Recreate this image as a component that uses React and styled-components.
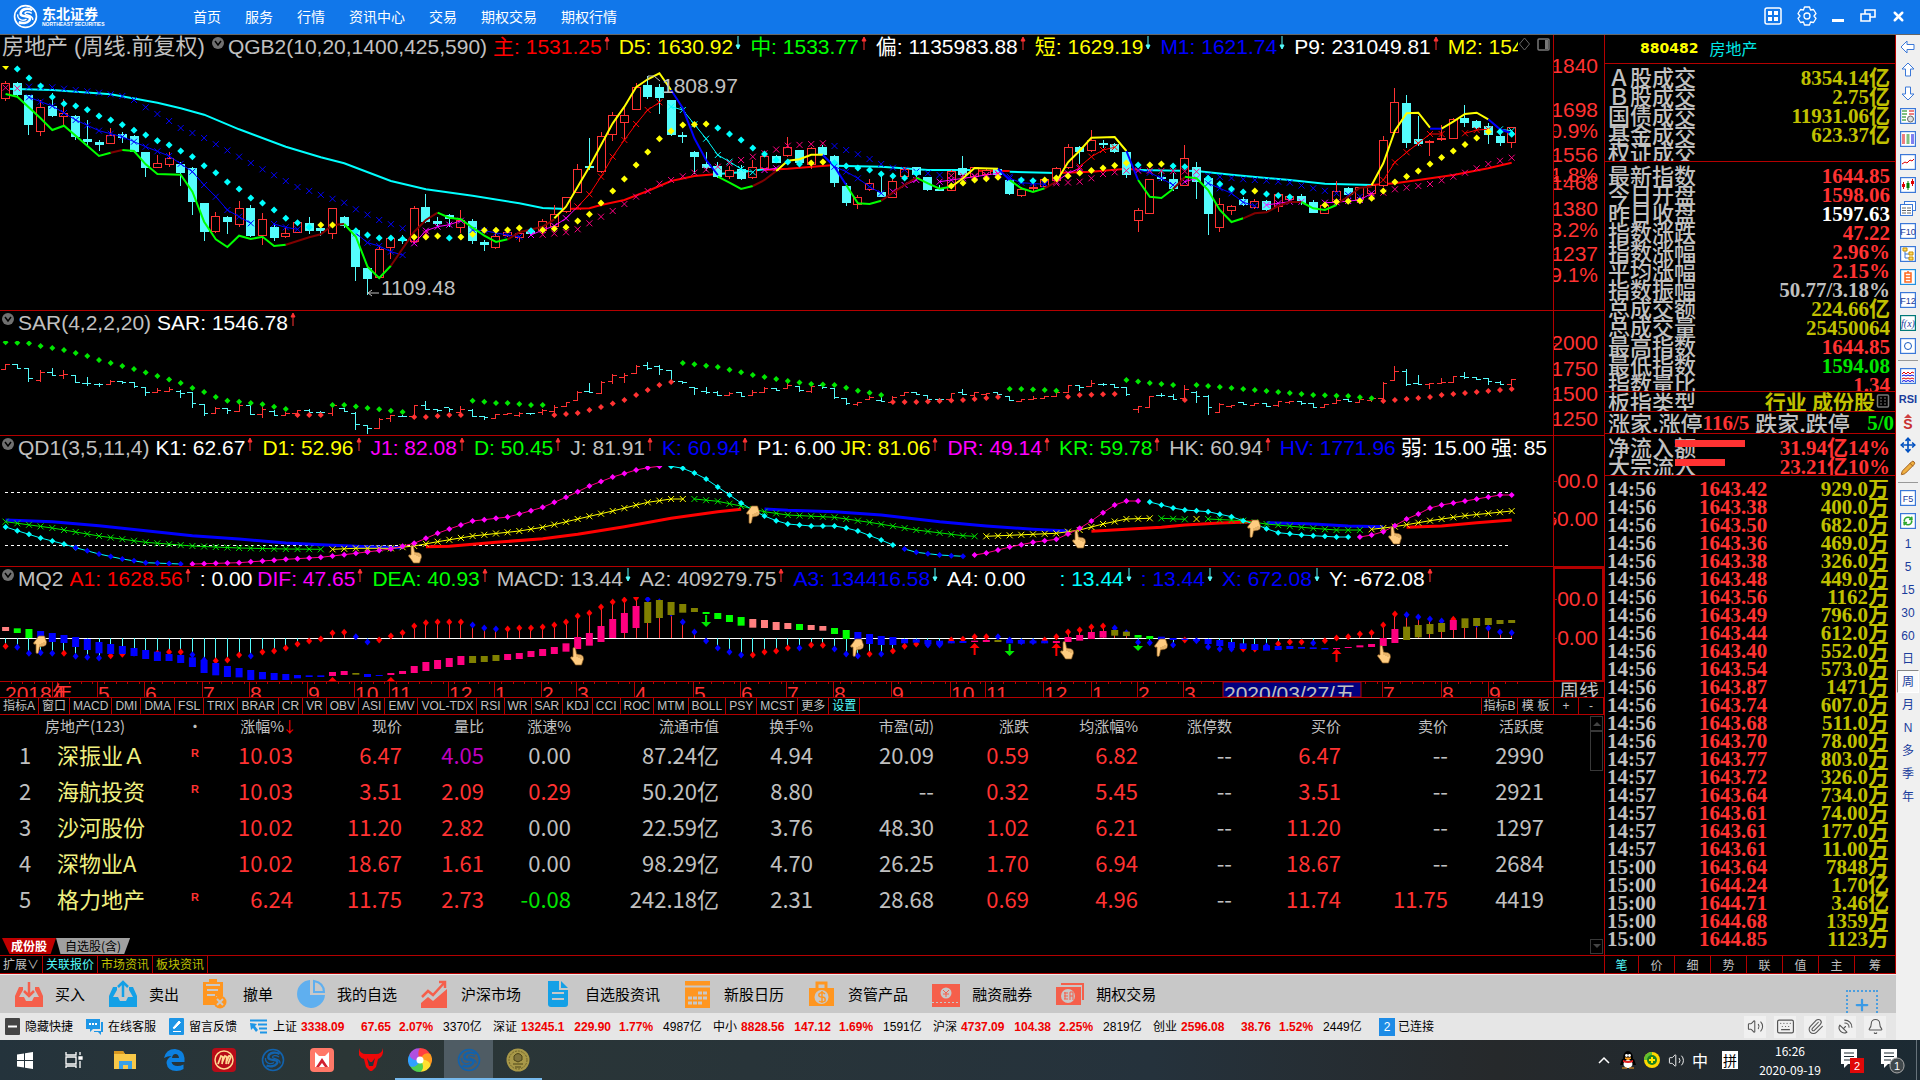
import React from 'react'
import styled, { createGlobalStyle, css } from 'styled-components'
import {
	Bell,
	Keyboard,
	Move,
	Paperclip,
	Pencil,
	Plus,
	RefreshCw,
	SatelliteDish,
	Volume2,
	X,
} from 'lucide-react'

const colors = {
	line: '#b40000',
	red: '#ff3232',
	pure: '#ff0000',
	cyan: '#54fcfc',
	aqua: '#00ffff',
	grey: '#c0c0c0',
	white: '#ffffff',
	yellow: '#ffff00',
	gold: '#c0c000',
	green: '#00e600',
	lime: '#00ff00',
	blue: '#0000ff',
	magenta: '#ff00ff',
	pink: '#ff0080',
	salmon: '#ff8080',
	olive: '#808000',
	maroon: '#800000',
}

const sans = `'Liberation Sans', 'Noto Sans CJK SC', sans-serif`
const cjk = `'Noto Sans CJK SC', sans-serif`
const serif = `'Liberation Serif', 'Noto Sans CJK SC', serif`

const GlobalStyle = createGlobalStyle`
	* {
		box-sizing: border-box;
	}
	body {
		margin: 0;
		background: #000;
		font-family: ${sans};
		font-size: 12px;
	}
	button {
		margin: 0;
		padding: 0;
		border: 0;
		background: none;
		color: inherit;
		font: inherit;
		white-space: nowrap;
	}
	a {
		color: inherit;
		text-decoration: none;
	}
	svg {
		display: block;
		flex: none;
	}
`

/* ---------- chart data ---------- */
// Levels are kept at three units per pixel, bars are addressed by index.

const STEP = 11.675
const barX = i => 5.6 + i * STEP

const parse = text =>
	text.split(' ').map(pair => pair.split(':').map(Number))

const run = (color, text) => ({ color, points: parse(text) })

// fills the gaps between the given points, one value for each bar
const expand = points => {
	const out = []
	points.forEach(([i, v], n) => {
		const next = points[n + 1]
		if (!next) {
			out.push([i, v])
			return
		}
		for (let k = i; k < next[0]; k++) {
			out.push([k, v + ((next[1] - v) * (k - i)) / (next[0] - i)])
		}
	})
	return out
}

// rising flag, high, body top, body bottom, low
const CANDLES = `1,243,250,296,302 0,245,250,282,290 0,285,286,374,405 1,300,322,394,408 0,280,318,345,350
1,297,340,349,382 0,345,348,410,420 0,360,418,425,440 0,420,426,434,453 1,385,405,430,432
0,396,404,412,428 0,405,408,453,458 0,456,457,503,531 1,465,489,502,505 1,455,475,493,500
0,485,492,516,558 0,500,504,605,645 0,608,609,693,722 1,635,649,695,700 0,648,652,665,702
1,603,625,674,680 0,615,625,705,712 1,640,657,706,735 0,668,681,711,722 1,680,700,710,714
1,660,668,697,700 0,651,669,690,701 0,670,686,690,708 1,625,626,700,716 0,648,652,675,684
0,685,692,800,842 0,800,804,836,885 1,735,748,832,836 1,712,715,742,776 0,705,719,722,732
1,618,625,723,730 0,583,621,663,668 0,650,663,670,682 0,642,645,655,680 1,630,660,682,700
0,657,665,720,732 0,720,727,734,753 1,700,708,742,748 1,690,698,706,712 1,682,700,712,725
0,690,695,700,708 1,658,664,690,705 1,615,642,680,690 1,590,592,634,640 1,493,508,577,580
0,414,498,503,510 1,397,408,514,520 1,337,346,403,423 1,325,346,367,418 1,250,262,328,330
0,228,255,288,298 0,252,262,291,342 0,300,300,404,408 0,397,405,408,428 0,452,457,470,523
0,455,492,502,513 0,487,500,530,534 1,497,510,529,538 0,495,507,536,540 1,480,502,532,536
1,455,470,506,510 0,465,469,486,490 1,410,441,466,470 0,450,451,486,495 1,440,445,492,508
0,436,441,462,468 0,466,468,548,560 0,550,558,608,618 1,586,592,612,627 1,538,551,568,572
0,515,576,590,592 1,535,545,592,594 1,500,508,530,536 0,500,502,524,530 0,530,531,569,573
0,555,569,572,573 1,510,514,571,573 0,468,504,524,530 1,500,502,530,545 1,505,510,522,535
0,505,508,522,537 0,540,541,581,585 1,560,569,586,590 1,540,562,566,575 1,533,538,558,562
1,500,505,540,548 1,432,442,502,506 0,438,441,455,492 1,390,421,452,455 0,420,429,432,445
0,430,432,455,459 0,450,456,524,533 1,625,631,661,695 1,536,538,640,643 0,510,532,535,543
0,520,537,564,574 1,435,475,556,558 0,487,501,543,597 0,525,536,641,705 1,595,613,682,695
1,615,619,630,645 0,590,599,612,618 1,597,604,622,628 0,600,603,627,632 1,580,583,620,635
1,585,588,598,608 0,582,588,608,615 0,600,606,638,640 1,612,615,640,642 1,544,573,605,608
0,560,564,584,592 1,560,563,598,603 1,550,556,580,590 1,408,421,555,560 1,264,307,398,400
0,285,309,426,444 0,347,417,429,438 1,420,424,428,468 1,375,415,418,424 1,355,359,415,417
0,315,354,368,380 0,360,363,383,388 0,368,378,404,432 0,400,408,428,438 1,380,382,428,443`
	.split(/\s+/)
	.map(row => row.split(',').map(Number))

const LONG_LINE = [
	run(colors.aqua, '0:266 4:270 9:283 13:308 15:325 17:344 20:388 24:440 27:472 29:490 33:543 36:568 40:587 44:610 46:624 48:627'),
	run(colors.pure, '48:627 50:625 51:615 53:600 55:573 57:543 59:528 61:522'),
	run(colors.aqua, '61:522 63:517 65:508'),
	run(colors.pure, '65:510 67:506 71:495'),
	run(colors.aqua, '71:497 75:500 79:510 83:510'),
	run(colors.pure, '83:512 86:513'),
	run(colors.aqua, '86:515 90:519'),
	run(colors.pure, '90:519 93:515 96:506 97:509'),
	run(colors.aqua, '97:510 102:513 105:524 110:540 113:551 117:555'),
	run(colors.pure, '117:555 119:550 121:540 124:525 127:505 129:488'),
]

const SHORT_LINE = [
	run(colors.lime, '0:282 1:290 3:355 4:390 5:377 8:468 9:458'),
	run(colors.maroon, '9:458 10:450'),
	run(colors.lime, '10:450 11:453 12:493 13:522 15:524 16:575 17:665 18:718 19:741 20:707 21:717 22:710 23:738 24:734'),
	run(colors.maroon, '24:734 26:712 27:703 28:675 29:672'),
	run(colors.lime, '29:672 30:710 31:800 32:834 33:797'),
	run(colors.maroon, '33:797 35:695 36:660 37:638'),
	run(colors.lime, '37:638 38:653 39:658 40:683 41:707 42:726 43:718'),
	run(colors.maroon, '43:718 44:697 46:680 47:658'),
	run(colors.yellow, '47:655 48:620 50:500 52:370 53:320 54:262 55:238 56:220 57:270'),
	run(colors.blue, '57:270 58:325 59:415 60:480 61:525'),
	run(colors.lime, '61:530 62:548 63:567 64:558'),
	run(colors.maroon, '64:558 65:540 66:513'),
	run(colors.yellow, '66:513 67:482 68:478 69:464 70:464'),
	run(colors.blue, '70:465 71:500 72:555'),
	run(colors.lime, '72:555 73:610 74:612 75:602'),
	run(colors.maroon, '75:602 77:555 78:533'),
	run(colors.lime, '78:533 79:550 80:566 81:560'),
	run(colors.yellow, '81:560 82:535 83:504 85:506'),
	run(colors.blue, '85:506 86:540'),
	run(colors.lime, '86:540 87:565 88:576 89:565'),
	run(colors.maroon, '89:565 90:545'),
	run(colors.yellow, '90:545 91:487 92:452 93:413 95:411 96:453'),
	run(colors.blue, '96:453 97:540'),
	run(colors.lime, '97:540 98:590 99:594 100:567'),
	run(colors.maroon, '100:567 101:532'),
	run(colors.lime, '101:530 102:535 103:570 104:630 105:666 106:655'),
	run(colors.maroon, '106:655 107:640 108:637 109:618 110:606 111:606'),
	run(colors.lime, '111:606 112:625 113:630 114:615'),
	run(colors.maroon, '114:612 115:590 116:563 117:560'),
	run(colors.yellow, '117:556 118:490 119:392 120:340 121:338 122:383'),
	run(colors.blue, '122:386 123:386'),
	run(colors.yellow, '123:386 124:365 125:342 126:338 127:358'),
	run(colors.blue, '127:358 128:388 129:400'),
]

const MID_LINE = [
	run(colors.blue, '2:292 4:318 6:360 8:392 10:410 12:440 14:468 16:515 17:555 18:590 19:630 20:650 21:670'),
	run(colors.blue, '23:672 24:682 25:688'),
	run(colors.blue, '30:700 31:728 32:738 33:755 34:765'),
	run(colors.magenta, '35:730 36:692 37:680 38:674 39:662'),
	run(colors.blue, '40:690 41:692 43:705 44:710'),
	run(colors.magenta, '45:705 46:690 47:678 48:655 49:620'),
	run(colors.pure, '49:620 50:583 51:530 52:470 53:420 54:372 55:330 56:307'),
	run(colors.aqua, '57:320 58:330 59:373 60:416 61:465 62:485 63:507 64:517'),
	run(colors.magenta, '65:510 66:505'),
	run(colors.blue, '71:500 72:515 73:535 74:560 75:580'),
	run(colors.magenta, '76:575 77:555 78:540'),
	run(colors.magenta, '80:545 81:540 83:530 85:520'),
	run(colors.blue, '86:535 87:548 89:553'),
	run(colors.magenta, '90:545 91:520 92:505'),
	run(colors.pure, '92:500 93:470 94:450 95:442'),
	run(colors.blue, '97:510 98:518 99:535 100:555'),
	run(colors.magenta, '101:545 102:535'),
	run(colors.blue, '103:550 104:565 105:580 106:607 107:617'),
	run(colors.magenta, '108:615 109:610 110:605 111:605'),
	run(colors.magenta, '113:608 114:607 115:603 116:600 117:580'),
	run(colors.pure, '118:540 119:487 120:457 121:430 122:402 123:402'),
	run(colors.pure, '125:400 126:390 127:388'),
	run(colors.aqua, '128:388 129:392'),
]

const CROSSES = [
	run(colors.pink, '0:263 1:265'),
	run(colors.blue, '2:260 4:262 6:270 8:278 10:288 11:300 12:322 13:342 15:384 17:414 20:470 22:508 25:561 29:608 30:628 32:660 34:685'),
	run(colors.pink, '35:720 36:700'),
	run(colors.pink, '46:704 48:697 49:688 50:670 51:650 52:633 53:612 54:590 55:573 56:551 57:540 59:518 61:500 63:480 65:460 67:437 70:430'),
	run(colors.blue, '71:438 72:450 73:463 74:477 75:492 76:503 78:515 80:525'),
	run(colors.pink, '81:527 83:528 85:522'),
	run(colors.blue, '86:530 87:543 89:552'),
	run(colors.pink, '90:550 92:545 93:535 94:522 96:512 98:512 102:515'),
	run(colors.blue, '103:527 106:538 108:542 110:548 112:565 114:580 116:590'),
	run(colors.pink, '117:590 118:578 119:568 121:558 122:552 124:530 125:518 127:492 129:473'),
]

const DOTS = [
	run(colors.aqua, '1:207 2:234 3:258 4:291 5:311 6:318 7:329 8:348 9:360 10:374 11:391 12:405 13:422 14:435 15:453 16:470 17:497 18:518 19:546 20:567 21:594 22:609 23:630 24:655 25:668 26:682'),
	run(colors.yellow, '27:675 28:675'),
	run(colors.aqua, '30:692 31:705 32:714 33:714 34:717'),
	run(colors.yellow, '35:711 36:711 37:708'),
	run(colors.aqua, '38:714'),
	run(colors.yellow, '39:711 40:703 41:691 43:690 44:684'),
	run(colors.aqua, '45:692'),
	run(colors.yellow, '46:690 48:682 49:663 50:643 51:609 52:573 53:537 54:495 55:456 56:416 57:393 58:375 60:372'),
	run(colors.aqua, '61:384 62:402 63:420 64:444 65:462 66:480 68:492'),
	run(colors.yellow, '69:489 70:486'),
	run(colors.aqua, '71:488 72:498 74:510 75:522 77:534 78:520'),
	run(colors.yellow, '81:558 83:540 85:532'),
	run(colors.aqua, '87:540 88:542'),
	run(colors.yellow, '89:540 91:528 92:519 94:504 96:489'),
	run(colors.aqua, '97:495'),
	run(colors.yellow, '98:495 99:492'),
	run(colors.aqua, '100:498 101:500'),
	run(colors.aqua, '103:535 104:552 105:567 106:576'),
	run(colors.yellow, '107:573'),
	run(colors.aqua, '108:582 110:591'),
	run(colors.yellow, '113:615 114:605 116:602 117:595 118:573 119:546 121:513 122:492 127:395'),
	run(colors.aqua, '128:395 129:403'),
]

const SAR_DOTS = [
	run(colors.green, '0:127 2:130 3:138 5:150 7:168 8:180 11:207 15:249 16:264 17:276 18:291 19:302 21:309 22:313 24:327'),
	run(colors.red, '25:345 27:345'),
	run(colors.green, '28:315 29:315 31:324 34:336'),
	run(colors.red, '35:351 36:351 38:345 39:345'),
	run(colors.green, '40:302 42:309 43:309 45:315 46:315'),
	run(colors.red, '47:345 49:339 51:321 53:300 54:285 56:255 57:246'),
	run(colors.green, '58:189 61:201 64:225 67:243 69:252 71:255 73:272 75:285'),
	run(colors.red, '76:306 78:306 82:300 85:291'),
	run(colors.green, '86:267 87:267 90:272'),
	run(colors.red, '91:290 92:285 95:282'),
	run(colors.green, '96:240 98:249 100:255'),
	run(colors.red, '101:300'),
	run(colors.green, '102:255 108:273 112:285 115:288 117:295'),
	run(colors.red, '118:303 122:291 123:285 129:267'),
]

const QD_SLOW = [
	run(colors.blue, '0:660 4:665 8:677 12:692 16:707 20:717 24:729 28:736 31:740 34:743'),
	run(colors.pure, '36:740 38:739 42:727 46:716 49:703 53:680 57:655 61:635 63:628'),
	run(colors.blue, '65:627 67:631 71:635 75:645 80:665 84:678 88:688 91:693'),
	run(colors.pure, '93:694 96:688 99:682 101:675 104:669 107:665'),
	run(colors.blue, '108:668 112:672 115:678 118:680'),
	run(colors.pure, '120:682 123:678 126:668 129:660'),
]

const QD_MID = [
	run(colors.green, '0:665 4:684 8:708 12:727 16:738 20:744 24:747 27:748'),
	run(colors.yellow, '28:748 30:745 33:745 35:738 37:725 40:708 44:693 46:682 49:657 52:633 55:607 57:597 58:597'),
	run(colors.green, '59:597 61:604 63:618 64:627 65:635 67:645 71:652 74:667 78:690 82:707 83:709'),
	run(colors.yellow, '84:709 88:703 90:700 92:690 94:672 96:657 98:655'),
	run(colors.green, '99:655 101:658'),
	run(colors.yellow, '102:657'),
	run(colors.green, '103:657 106:662 108:672 112:685 114:690 116:690'),
	run(colors.yellow, '117:688 119:680 122:662 125:647 129:633'),
]

const QD_FAST = [
	run(colors.aqua, '0:681 1:692 3:714 5:732 6:743'),
	run(colors.blue, '6:743 8:762 10:777 12:788 15:792'),
	run(colors.magenta, '16:792 20:788 24:778 27:772 30:760 33:747 35:730 37:700 38:687 40:663 43:651 44:642 46:622 48:592 50:558 52:531 54:510 55:503 56:499'),
	run(colors.aqua, '57:499 58:505 59:519 60:537 61:561 62:585 63:609 64:630 65:648 66:662 67:672 69:678 71:678 72:684 73:693 75:720 76:735'),
	run(colors.blue, '77:747 78:757 80:765 82:769'),
	run(colors.magenta, '83:765 84:759 86:741 88:727 90:718 91:702 92:685 93:663 94:638 95:615 96:603 97:603'),
	run(colors.aqua, '98:606 99:615 100:624 101:630 103:635 105:650 106:662 107:672 108:686 109:698 111:705 114:711 115:711'),
	run(colors.magenta, '116:711 117:705 118:695 119:677 120:657 121:642 122:624 123:615 125:603 127:591 128:585 129:585'),
]

const STEMS = `1039r 1042b 1060b 1058b 1060b 1060r 1069b 1072b 1074b 1067r 1063r 1060b 1065b 1060r 1056r 1056r 1064b 1080b
1082r 1080r 1065r 1068b 1056r 1053r 1044r 1032r 1023r 1017r 999r 997r 1010b 1026b 1020r 1008r 998r 978r 968r 966r
966r 966r 975b 984b 987b 987r 984r 984r 981r 975r 966r 948r 939r 921r 906r 900r 893r 898b 905b 940b 966b 996b
1023b 1044b 1056b 1065b 1065r 1056r 1053r 1044r 1044b 1035r 1036r 1047b 1062b 1068b 1062r 1062b 1053r 1039r 1032r
1035b 1035b 1020r 1018r 1010r 1010r 1010b 1020b 1025b 1025b 1020r 1010r 996r 990r 981r 978r 984b 998b 1027b 1028b
1030b 1035b 1020r 1022b 1041b 1047b 1047b 1047r 1047r 1038b 1031r 1026r 1026r 1029b 1022r 1014r 1010r 1002r 998r
975r 942r 944b 951b 957b 963b 958r 965b 973b 984b 996b 998b`
	.split(/\s+/)
	.map(s => [parseInt(s, 10), s.slice(-1) === 'r' ? colors.pure : colors.blue])

const BAR_COLORS = {
	s: colors.salmon,
	g: colors.lime,
	b: colors.blue,
	p: colors.pink,
	o: colors.olive,
}

const BARS = `s981-993 g985-999 g987-1014 b993-1017 b999-1026 b1005-1029 b1011-1041 b1017-1050 b1026-1060 b1032-1062
b1038-1062 b1044-1068 b1050-1077 b1055-1083 b1062-1083 b1065-1089 b1072-1101 b1080-1119 b1089-1126 b1098-1131
b1104-1132 b1110-1140 b1116-1138 b1119-1140 b1122-1140 b1125-1135 b1126-1131 b1126-1131 p1116-1128 p1113-1125
o1119-1124 b1122-1131 b1125-1128 p1119-1125 p1113-1122 p1098-1119 p1086-1113 p1080-1107 p1074-1101 p1068-1095
o1068-1089 o1068-1086 o1065-1083 p1062-1080 p1059-1077 p1053-1071 p1047-1068 p1041-1062 p1030-1055 p1011-1047
p999-1037 p978-1026 p957-1014 p939-999 p918-984 o906-969 o900-954 o906-945 o912-938 o924-936 g936-942 g939-957
g945-966 g951-977 s957-983 s960-984 s966-990 s969-987 g972-990 s975-990 s978-992 g984-1002 g990-1017 b996-1026
b1002-1032 b1008-1035 b1011-1035 b1017-1030 b1018-1028 b1020-1033 b1022-1034 b1023-1030 b1023-1029 p1022-1026
p1020-1026 o1020-1026 b1020-1030 b1020-1031 b1022-1030 b1022-1030 p1023-1029 p1011-1026 p1005-1022 p996-1017
p993-1013 o990-1007 o995-1008 g1005-1013 g1008-1017 b1010-1020 b1014-1020 b1016-1020 b1017-1023 b1017-1032
b1020-1038 b1026-1044 b1030-1047 b1032-1050 b1036-1052 b1038-1050 b1038-1047 b1041-1046 b1042-1047 b1044-1048
p1044-1047 p1041-1044 p1036-1042 p1032-1041 p1014-1038 p987-1029 o980-1020 o975-1012 o972-1002 o969-996 p960-990
o955-984 o954-978 o954-975 o960-972 o960-969`
	.split(/\s+/)
	.map(s => [BAR_COLORS[s[0]], ...s.slice(1).split('-').map(Number)])

const READOUTS = {
	main: [
		['主: 1531.25', colors.pure, 'up'],
		['D5: 1630.92', colors.yellow, 'down'],
		['中: 1533.77', colors.lime, 'up'],
		['偏: 1135983.88', colors.white, 'up'],
		['短: 1629.19', colors.yellow, 'down'],
		['M1: 1621.74', colors.blue, 'down'],
		['P9: 231049.81', colors.white, 'up'],
		['M2: 1543.20', colors.yellow],
	],
	sar: [['SAR: 1546.78', colors.white, 'up']],
	qd: [
		['K1: 62.67', colors.white, 'up'],
		['D1: 52.96', colors.yellow, 'up'],
		['J1: 82.08', colors.magenta, 'up'],
		['D: 50.45', colors.lime, 'up'],
		['J: 81.91', colors.grey, 'up'],
		['K: 60.94', colors.blue, 'up'],
		['P1: 6.00', colors.white],
		['JR: 81.06', colors.yellow, 'up'],
		['DR: 49.14', colors.magenta, 'up'],
		['KR: 59.78', colors.lime, 'up'],
		['HK: 60.94', colors.grey, 'up'],
		['HV: 1771.96', colors.blue],
		['弱: 15.00', colors.white],
		['强: 85', colors.white],
	],
	mq: [
		['A1: 1628.56', colors.pure, 'up'],
		[': 0.00', colors.white],
		['DIF: 47.65', colors.magenta, 'up'],
		['DEA: 40.93', colors.lime, 'up'],
		['MACD: 13.44', colors.grey, 'down'],
		['A2: 409279.75', colors.grey, 'up'],
		['A3: 134416.58', colors.blue, 'down'],
		['A4: 0.00', colors.white],
		['\u00a0\u00a0\u00a0\u00a0\u00a0: 13.44', colors.aqua, 'down'],
		[': 13.44', colors.blue, 'down'],
		['X: 672.08', colors.blue, 'down'],
		['Y: -672.08', colors.white, 'up'],
	],
}

/* ---------- drawing parts ---------- */

const path = points =>
	points.map(([i, v], n) => `${n ? 'L' : 'M'}${barX(i).toFixed(1)} ${(v / 3).toFixed(1)}`).join('')

const Lines = ({ runs, width, top = 0, color }) => (
	<g transform={`translate(0 ${top})`} fill="none" strokeWidth={width}>
		{runs.map((r, n) => (
			<path key={n} d={path(r.points)} stroke={color || r.color} />
		))}
	</g>
)

const Crosses = ({ runs, top = 0 }) => (
	<g transform={`translate(0 ${top})`} fill="none">
		{runs.map((r, n) => (
			<path
				key={n}
				stroke={r.color}
				d={expand(r.points)
					.map(([i, v]) => `M${(barX(i) - 3).toFixed(1)} ${(v / 3 - 3).toFixed(1)}l6 6m0 -6l-6 6`)
					.join('')}
			/>
		))}
	</g>
)

const Diamonds = ({ runs, top = 0, size = 3 }) => (
	<g transform={`translate(0 ${top})`}>
		{runs.map((r, n) => (
			<path
				key={n}
				fill={r.color}
				d={expand(r.points)
					.map(([i, v]) => `M${barX(i).toFixed(1)} ${(v / 3 - size).toFixed(1)}l${size} ${size}l-${size} ${size}l-${size} -${size}z`)
					.join('')}
			/>
		))}
	</g>
)

const Hand = ({ x, y, down }) => (
	<g transform={`translate(${x} ${y}) scale(1 ${down ? -1 : 1})`}>
		<path
			d="M-4 -8q1.500 -1 2.500 0.500l1 5.500l5 1q2 1 2 4l-1 3l-1 3h-6l-2 -3l-3 -4q0 -2 2.500 -1z"
			fill="#ffcc80"
			stroke="#8a5a20"
			strokeWidth="0.700"
		/>
		<path d="M0 -2v3M2 -1v3M4 0v3" stroke="#b07830" strokeWidth="0.600" />
	</g>
)

const Signal = ({ i, top, bottom, down }) => {
	const x = barX(i)
	const tip = down ? bottom : top
	const base = down ? bottom - 5 : top + 5
	return (
		<g fill={down ? colors.green : colors.pure}>
			<path d={`M${x} ${tip}L${x - 5} ${base}H${x + 5}z`} />
			<rect
				x={x - 1}
				y={down ? top : base}
				width="2"
				height={Math.max(0, bottom - top - 5)}
			/>
		</g>
	)
}

const Arrow = ({ dir }) => (
	<svg width="12" height="18" viewBox="0 0 12 18">
		{dir === 'up' ? (
			<path d="M5 3v12M3 6l2 -4l2 4z" stroke={colors.red} fill={colors.red} />
		) : (
			<path d="M5 1v12M3 10l2 4l2 -4z" stroke={colors.cyan} fill={colors.cyan} />
		)}
	</svg>
)

const Swirl = ({ size, color }) => (
	<svg width={size} height={size} viewBox="0 0 24 24" fill="none" stroke={color}>
		<circle cx="12" cy="12" r="10.500" strokeWidth="1.600" />
		<path d="M18.500 6C15 3.500 8.500 4.500 7.500 8S10 11.500 13 12s4.500 1.500 2.500 4s-6.500 3 -10 1.500" strokeWidth="2.400" />
		<path d="M18 9C15 7 11.500 7.500 11.500 9.200S20 10.500 19 15.500" strokeWidth="1.300" />
		<path d="M4.500 10c-0.500 5 5 7 8.500 4.500" strokeWidth="1.300" />
	</svg>
)

/* ---------- window frame ---------- */

const Screen = styled.div`
	display: flex;
	flex-direction: column;
	min-height: 100vh;
	background: #000;
`

const TitleBar = styled.header`
	display: flex;
	align-items: center;
	height: 35px;
	padding: 0 14px 2px 13px;
	border-bottom: 1px solid #666;
	background: #1177ea;
	color: #fff;
`

const Brand = styled.a`
	display: flex;
	align-items: center;
	gap: 4px;
	width: 180px;
`

const BrandName = styled.span`
	display: flex;
	flex-direction: column;
	font: bold 14px/16px ${cjk};
	small {
		font: bold 5px/6px ${sans};
	}
`

const Menu = styled.nav`
	display: flex;
	flex: 1;
	gap: 24px;
	font: 14px/20px ${cjk};
`

const WindowTools = styled.div`
	display: flex;
	align-items: center;
	gap: 15px;
`

const Body = styled.div`
	display: flex;
	flex: 1;
`

const Main = styled.main`
	display: flex;
	flex: 1;
	flex-direction: column;
	min-width: 0;
`

const Workspace = styled.div`
	display: flex;
	flex: 1;
	border-bottom: 1px solid ${colors.line};
`

const Left = styled.div`
	display: flex;
	flex: 1;
	flex-direction: column;
	min-width: 0;
`

/* ---------- charts ---------- */

const Pane = styled.section`
	display: grid;
	grid-template-columns: minmax(0, 1fr) 51px;
	height: ${p => p.$height}px;
	border-bottom: 1px solid ${colors.line};
`

const Plot = styled.div`
	display: flex;
	flex-direction: column;
	min-width: 0;
	overflow: hidden;
	> svg {
		width: 100%;
		flex: 1;
		min-height: 0;
	}
`

const AxisBox = styled.div`
	overflow: hidden;
	border-left: 1px solid ${colors.line};
	${p => p.$active && `border: 2px solid ${colors.line}; border-bottom-width: 1px;`}
	svg {
		margin: ${p => (p.$active ? '-2px 0 0 -1px' : '0')};
	}
`

const PaneHead = styled.header`
	display: flex;
	flex: none;
	height: 30px;
	padding-left: 2px;
	color: ${colors.grey};
	font: 21px/24px ${sans};
	white-space: nowrap;
`

const Caption = styled.h2`
	margin: 0;
	margin-right: 6px;
	font: inherit;
`

const StockCaption = styled(Caption)`
	margin-right: 7px;
	font-size: 22px;
`

const Toggle = styled.button`
	width: 16px;
	height: 18px;
	svg {
		margin-top: -1px;
	}
`

const Readout = styled.div`
	display: flex;
	flex: 1;
	gap: 5px;
	min-width: 0;
	overflow: hidden;
`

const Value = styled.span`
	display: flex;
	flex: none;
	color: ${p => p.$color};
`

const PaneTools = styled.div`
	display: flex;
	gap: 6px;
	padding: 2px 3px 0 0;
`

const ToggleIcon = () => (
	<Toggle aria-label="指标设置">
		<svg width="12" height="20" viewBox="0 0 12 20">
			<circle cx="6" cy="9" r="6" fill="#707070" />
			<path d="M3 7l3 4l3 -4" fill="none" stroke="#000" strokeWidth="1.500" />
		</svg>
	</Toggle>
)

const Head = ({ title, name, items, tools }) => (
	<PaneHead>
		{title && <StockCaption>{title}</StockCaption>}
		<ToggleIcon />
		<Caption>{name}</Caption>
		<Readout>
			{items.map(([text, color, dir], n) => (
				<Value key={n} $color={color}>
					{text}
					{dir && <Arrow dir={dir} />}
				</Value>
			))}
		</Readout>
		{tools && (
			<PaneTools>
				<svg width="13" height="14" viewBox="0 0 13 14">
					<path d="M6.500 1l5 6l-5 6l-5 -6z" fill="none" stroke="#666" />
				</svg>
				<svg width="13" height="14" viewBox="0 0 13 14">
					<rect x="1" y="2" width="11" height="11" rx="1" fill="none" stroke="#777" strokeWidth="1.500" />
					<rect x="8" y="3" width="3" height="9" fill="#777" />
				</svg>
			</PaneTools>
		)}
	</PaneHead>
)

const Axis = ({ top, height, labels, active }) => (
	<AxisBox $active={active}>
		<svg width="50" height={height} viewBox={`0 ${top} 50 ${height}`}>
			<g fill={colors.red} fontFamily="Liberation Sans" fontSize="21" textAnchor="end">
				{labels.map(([y, text]) => (
					<text key={y} x="44" y={y + 7}>
						{text}
					</text>
				))}
			</g>
			<path d={labels.map(([y]) => `M0 ${y}.500h3`).join('')} stroke={colors.line} />
		</svg>
	</AxisBox>
)

const Canvas = ({ top, height, children }) => (
	<svg viewBox={`0 ${top} 1553 ${height}`} preserveAspectRatio="none">
		{children}
	</svg>
)

const PricePane = () => (
	<Pane $height={276}>
		<Plot>
			<Head title="房地产 (周线.前复权)" name="QGB2(10,20,1400,425,590)" items={READOUTS.main} tools />
			<Canvas top={65} height={245}>
				<Lines runs={LONG_LINE} width="2" />
				{CANDLES.map(([up, high, a, b, low], i) => {
					const x = barX(i)
					const color = up ? colors.red : colors.cyan
					return (
						<g key={i} stroke={color} fill={up ? '#000' : color} shapeRendering="crispEdges">
							<path d={`M${x} ${high / 3}V${a / 3}M${x} ${b / 3}V${low / 3}`} />
							<rect x={x - 4} y={a / 3} width="8" height={Math.max(1, (b - a) / 3)} />
						</g>
					)
				})}
				<Lines runs={MID_LINE} width="1" />
				<Crosses runs={MID_LINE} />
				<Crosses runs={CROSSES} />
				<Lines runs={SHORT_LINE} width="2" />
				<Diamonds runs={DOTS} size={3.5} />
				<path d="M2 66h7l-3 4z" fill={colors.yellow} />
				<path d="M367 293h12M372 290l-4 3l4 3M648 76h6l6 5M648 76v4" stroke={colors.grey} fill="none" />
				<g fill={colors.grey} fontFamily="Liberation Sans" fontSize="21">
					<text x="662" y="93">1808.97</text>
					<text x="381" y="295">1109.48</text>
				</g>
			</Canvas>
		</Plot>
		<Axis
			top={35}
			height={275}
			labels={[
				[66, '1840'],
				[110, '1698'],
				[131, '0.9%'],
				[155, '1556'],
				[175, '1.8%'],
				[183, '1468'],
				[209, '1380'],
				[230, '3.2%'],
				[254, '1237'],
				[275, '9.1%'],
			]}
		/>
	</Pane>
)

const sarY = v => 300 + (177.3 + 0.328 * (v - 198)) / 3

const SarPane = () => (
	<Pane $height={125}>
		<Plot>
			<Head name="SAR(4,2,2,20)" items={READOUTS.sar} />
			<Canvas top={341} height={94}>
				{CANDLES.map(([up, high, a, b, low], i) => {
					const x = barX(i)
					return (
						<path
							key={i}
							shapeRendering="crispEdges"
							stroke={up ? colors.red : colors.cyan}
							d={`M${x} ${sarY(high)}V${sarY(low)}M${x - 5} ${sarY(up ? b : a)}H${x}M${x} ${sarY(up ? a : b)}h4`}
						/>
					)
				})}
				<Diamonds runs={SAR_DOTS} top={300} />
			</Canvas>
		</Plot>
		<Axis top={311} height={124} labels={[[343, '2000'], [369, '1750'], [394, '1500'], [419, '1250']]} />
	</Pane>
)

const QdPane = () => (
	<Pane $height={131}>
		<Plot>
			<Head name="QD1(3,5,11,4)" items={READOUTS.qd} />
			<Canvas top={466} height={100}>
				<path d="M5 492.500H1508M5 545.500H1508" stroke="#fff" strokeDasharray="3 3" />
				<Lines runs={QD_SLOW} width="3" top={300} />
				<Lines runs={QD_MID} width="1" top={300} />
				<Crosses runs={QD_MID} top={300} />
				<Lines runs={QD_FAST.filter(r => r.color === colors.magenta)} width="1" top={300} color={colors.pink} />
				<Lines runs={QD_FAST.filter(r => r.color !== colors.magenta)} width="1" top={300} color={colors.aqua} />
				<Diamonds runs={QD_FAST} top={300} />
				<Hand x={415} y={554} />
				<Hand x={753} y={515} down />
				<Hand x={1079} y={539} />
				<Hand x={1254} y={529} down />
				<Hand x={1395} y={535} />
			</Canvas>
		</Plot>
		<Axis top={436} height={130} labels={[[481, '00.0'], [519, '50.00']]} />
	</Pane>
)

const MqPane = () => (
	<Pane $height={115}>
		<Plot>
			<Head name="MQ2" items={READOUTS.mq} />
			<Canvas top={597} height={84}>
				<path d="M0 638.500H1512" stroke="#fff" />
				{STEMS.map(([v], i) => (
					<path
						key={i}
						shapeRendering="crispEdges"
						stroke={v > 1016 ? colors.cyan : colors.red}
						d={`M${barX(i)} 638V${300 + v / 3}`}
					/>
				))}
				{STEMS.map(([v, color], i) => (
					<path key={i} fill={color} d={`M${barX(i)} ${296.5 + v / 3}l3 3.500l-3 3.500l-3 -3.500z`} />
				))}
				{BARS.map(([color, a, b], i) => (
					<rect key={i} x={barX(i) - 3.5} y={300 + a / 3} width="7" height={(b - a) / 3} fill={color} />
				))}
				<Signal i={28} top={677} bottom={682} />
				<Signal i={33} top={677} bottom={682} />
				<Signal i={60} top={615} bottom={627} down />
				<Signal i={83} top={643} bottom={655} />
				<Signal i={86} top={644} bottom={656} down />
				<Signal i={90} top={643} bottom={656} />
				<Signal i={97} top={645} bottom={651} down />
				<Signal i={114} top={649} bottom={662} />
				<Hand x={40} y={645} down />
				<Hand x={577} y={656} />
				<Hand x={857} y={648} down />
				<Hand x={1067} y={650} />
				<Hand x={1161} y={648} down />
				<Hand x={1384} y={654} />
			</Canvas>
		</Plot>
		<Axis active top={567} height={114} labels={[[599, '00.0'], [638, '0.00']]} />
	</Pane>
)

const MONTHS = [
	[52, '4'], [97, '5'], [144, '6'], [202, '7'], [249, '8'], [307, '9'], [354, '10'], [389, '11'], [448, '12'],
	[494, '1'], [541, '2'], [576, '3'], [634, '4'], [693, '5'], [740, '6'], [786, '7'], [833, '8'], [891, '9'],
	[950, '10'], [985, '11'], [1043, '12'], [1091, '1'], [1137, '2'], [1183, '3'], [1382, '7'], [1441, '8'], [1488, '9'],
]

const TimeAxis = styled.div`
	display: grid;
	grid-template-columns: minmax(0, 1fr) 51px;
	height: 15px;
	overflow: hidden;
	svg {
		width: 100%;
	}
`

const Period = styled.div`
	padding-left: 5px;
	border-left: 1px solid ${colors.line};
	color: ${colors.grey};
	font: 20px/18px ${cjk};
	overflow: hidden;
`

const Timeline = () => (
	<TimeAxis>
		<svg height="15" viewBox="0 682 1553 15" preserveAspectRatio="none">
			<path d={MONTHS.map(([x]) => `M${x}.500 682V697`).join('')} stroke={colors.line} />
			<path
				d={CANDLES.map((c, i) => `M${Math.round(barX(i)) + 5}.500 682v2`).join('')}
				stroke={colors.line}
			/>
			<g fill={colors.red} fontFamily="Liberation Sans, Noto Sans CJK SC" fontSize="21">
				<text x="5" y="701">2018年</text>
				{MONTHS.map(([x, text]) => (
					<text key={x} x={x + 1} y="701">{text}</text>
				))}
			</g>
			<rect x="1223" y="682" width="138" height="15" fill="#000080" stroke={colors.line} />
			<text x="1224" y="701" fill={colors.grey} fontFamily="Liberation Sans, Noto Sans CJK SC" fontSize="21">
				2020/03/27/五
			</text>
		</svg>
		<Period>周线</Period>
	</TimeAxis>
)

const INDICATORS = (
	'指标A 窗口 MACD DMI DMA FSL TRIX BRAR CR VR OBV ASI EMV VOL-TDX RSI WR SAR KDJ CCI ROC MTM BOLL PSY MCST 更多 设置'
).split(' ')

const Strip = styled.div`
	display: flex;
	flex: none;
	height: 18px;
	border-top: 1px solid ${colors.line};
	border-bottom: ${p => (p.$last ? 0 : 1)}px solid ${colors.line};
	color: ${colors.grey};
`

const StripButton = styled.button`
	padding: 0 3px;
	border-right: 1px solid ${colors.line};
	color: ${p => p.$color || colors.grey};
	font: 12px/16px ${sans};
	${p => p.$width && `width: ${p.$width}px; padding: 0;`}
	${p => p.$first && `margin-left: auto; border-left: 1px solid ${colors.line};`}
`

/* ---------- stock list ---------- */

const COLUMNS = [
	['涨幅%', 83], ['现价', 109], ['量比', 82], ['涨速%', 87], ['流通市值', 148], ['换手%', 94], ['市盈(动)', 121],
	['涨跌', 95], ['均涨幅%', 109], ['涨停数', 94], ['买价', 109], ['卖价', 107], ['活跃度', 96],
]

const STOCKS = [
	['深振业Ａ', true, '10.03 6.47 4.05 0.00 87.24亿 4.94 20.09 0.59 6.82 -- 6.47 -- 2990', 'rrmwwwwrrwrww'],
	['海航投资', true, '10.03 3.51 2.09 0.29 50.20亿 8.80 -- 0.32 5.45 -- 3.51 -- 2921', 'rrrrwwwrrwrww'],
	['沙河股份', false, '10.02 11.20 2.82 0.00 22.59亿 3.76 48.30 1.02 6.21 -- 11.20 -- 1297', 'rrrwwwwrrwrww'],
	['深物业A', false, '10.02 18.67 1.61 0.00 98.29亿 4.70 26.25 1.70 6.94 -- 18.67 -- 2684', 'rrrwwwwrrwrww'],
	['格力地产', true, '6.24 11.75 2.73 -0.08 242.18亿 2.31 28.68 0.69 4.96 -- 11.74 11.75 4419', 'rrrgwwwrrwrrw'],
]

const CELL_COLORS = { r: colors.red, w: colors.grey, m: '#c000c0', g: colors.green }

const ListArea = styled.section`
	display: flex;
	flex: 1;
`

const ListColumn = styled.div`
	display: flex;
	flex: 1;
	flex-direction: column;
	justify-content: space-between;
	min-width: 0;
`

const StockTable = styled.table`
	width: 100%;
	table-layout: fixed;
	border-collapse: collapse;
	color: ${colors.grey};
	th {
		height: 23px;
		padding: 0 0 2px;
		font: 15px/20px ${cjk};
		text-align: right;
		white-space: nowrap;
	}
	th:nth-child(2) {
		padding-left: 5px;
		text-align: left;
	}
	th:nth-child(3) {
		text-align: center;
	}
	td {
		height: 36px;
		padding: 0 0 4px;
		font: 22px/30px ${cjk};
		text-align: right;
		white-space: nowrap;
	}
	td:first-child {
		padding-left: 10px;
		text-align: center;
	}
`

const Name = styled.td`
	color: #f0f080;
	&& {
		padding-left: 17px;
		text-align: left;
	}
`

const Cell = styled.td`
	color: ${p => p.$color};
`

const Flag = styled.td`
	&& {
		color: ${colors.red};
		font: bold 11px/30px ${sans};
		text-align: center;
		vertical-align: top;
	}
`

const SortMark = styled.span`
	color: ${colors.pure};
	margin: 0 -4px 0 -2px;
`

const Sheets = styled.div`
	display: flex;
	height: 17px;
	padding-left: 2px;
`

const Sheet = styled.button`
	height: 16px;
	padding: 0 9px;
	clip-path: ${p =>
		p.$active ? 'polygon(0 0, 100% 0, 90% 100%, 14% 100%)' : 'polygon(0 0, 100% 0, 92% 100%, 6% 100%)'};
	background: ${p => (p.$active ? '#c00000' : '#a0a0a0')};
	color: ${p => (p.$active ? '#fff' : '#000')};
	font: ${p => (p.$active ? 'bold' : 'normal')} 12px/16px ${cjk};
`

const ScrollRail = styled.div`
	display: flex;
	flex-direction: column;
	width: 13px;
	margin: 1px 1px 1px 0;
`

const ScrollPart = styled.button`
	height: ${p => p.$height}px;
	border: 1px solid #383838;
	${p => p.$end && 'margin-top: auto;'}
	svg {
		margin: 0 auto;
	}
`

const StockList = () => (
	<ListArea>
		<ListColumn>
			<StockTable>
				<colgroup>
					<col width="40" />
					<col width="140" />
					<col width="30" />
					{COLUMNS.map(([name, width]) => (
						<col key={name} width={width} />
					))}
					<col />
				</colgroup>
				<thead>
					<tr>
						<th />
						<th>房地产(123)</th>
						<th>·</th>
						{COLUMNS.map(([name], n) => (
							<th key={name}>
								{name}
								{n === 0 && <SortMark>↓</SortMark>}
							</th>
						))}
						<th />
					</tr>
				</thead>
				<tbody>
					{STOCKS.map(([name, flag, values, tones], n) => (
						<tr key={name}>
							<td>{n + 1}</td>
							<Name>{name}</Name>
							<Flag>{flag && 'R'}</Flag>
							{values.split(' ').map((v, k) => (
								<Cell key={k} $color={CELL_COLORS[tones[k]]}>
									{v}
								</Cell>
							))}
							<td />
						</tr>
					))}
				</tbody>
			</StockTable>
			<Sheets>
				<Sheet $active>成份股</Sheet>
				<Sheet>自选股(含)</Sheet>
			</Sheets>
		</ListColumn>
		<ScrollRail>
			<ScrollPart $height={15} aria-label="向上">
				<svg width="8" height="5"><path d="M0 5l4 -4l4 4z" fill="#444" /></svg>
			</ScrollPart>
			<ScrollPart $height={40} aria-label="滚动条" />
			<ScrollPart $height={15} $end aria-label="向下">
				<svg width="8" height="5"><path d="M0 0l4 4l4 -4z" fill="#444" /></svg>
			</ScrollPart>
		</ScrollRail>
	</ListArea>
)

/* ---------- quote panel ---------- */

const QuotePanel = styled.aside`
	display: flex;
	flex-direction: column;
	width: 292px;
	border-left: 1px solid ${colors.line};
	border-right: 1px solid ${colors.line};
	color: ${colors.grey};
	font: bold 21px/19px ${serif};
`

const QuoteTitle = styled.header`
	display: flex;
	align-items: center;
	gap: 11px;
	height: 29px;
	padding: 0 0 2px 35px;
	border-bottom: 1px solid ${colors.line};
	b {
		color: ${colors.yellow};
		font: bold 14px/20px 'DejaVu Sans', sans-serif;
	}
	span {
		color: #00e6e6;
		font: 16px/18px ${cjk};
	}
`

const QuoteGroup = styled.dl`
	height: ${p => p.$height}px;
	margin: 0;
	padding: ${p => p.$top}px 5px 0 3px;
	border-bottom: 1px solid ${colors.line};
	overflow: hidden;
`

const QuoteRow = styled.div`
	position: relative;
	display: flex;
	height: 19px;
	white-space: nowrap;
	dt {
		flex: 1;
		font: 500 22px/15px ${cjk};
	}
	dd {
		margin: 0;
		color: ${p => p.$color};
	}
`

const FlowBar = styled.i`
	position: absolute;
	left: 67px;
	top: 1px;
	width: ${p => p.$width}px;
	height: 7px;
	background: ${colors.red};
`

const Breadth = styled.div`
	display: flex;
	height: 22px;
	padding: 2px 1px 0 3px;
	border-bottom: 1px solid ${colors.line};
	overflow: hidden;
	white-space: nowrap;
	span {
		font: 500 22px/17px ${cjk};
	}
	b {
		color: ${colors.red};
		margin-right: 6px;
	}
	b:last-child {
		margin: 0 0 0 auto;
		color: ${colors.green};
	}
`

const Ticks = styled.table`
	width: 100%;
	margin: 4px 0;
	table-layout: fixed;
	border-collapse: collapse;
	font: bold 21px/18px ${serif};
	td {
		height: 18px;
		padding: 0 0 0 2px;
		overflow: hidden;
	}
	td:nth-child(2) {
		color: ${colors.red};
	}
	td:nth-child(3) {
		padding-right: 6px;
		color: ${colors.gold};
		text-align: right;
	}
`

const QuoteTabs = styled.nav`
	display: grid;
	grid-template-columns: 34px repeat(6, 36px) 1fr;
	height: 18px;
	margin-top: auto;
	border-top: 1px solid ${colors.line};
`

const QuoteTab = styled.button`
	border-right: 1px solid ${colors.line};
	color: ${p => (p.$active ? colors.cyan : colors.grey)};
	font: 12px/16px ${cjk};
	&:last-child {
		border: 0;
	}
`

const TURNOVER = [
	['Ａ股成交', '8354.14亿'],
	['Ｂ股成交', '2.75亿'],
	['国债成交', '11931.06亿'],
	['基金成交', '623.37亿'],
	['权证成交', ''],
]

const INDEX_ROWS = [
	['最新指数', '1644.85', colors.red],
	['今日开盘', '1598.06', colors.red],
	['昨日收盘', '1597.63', colors.white],
	['指数涨跌', '47.22', colors.red],
	['指数涨幅', '2.96%', colors.red],
	['平均涨幅', '2.15%', colors.red],
	['指数振幅', '50.77/3.18%', colors.grey],
	['总成交额', '224.66亿', colors.gold],
	['总成交量', '25450064', colors.gold],
	['最高指数', '1644.85', colors.red],
	['最低指数', '1594.08', colors.green],
	['指数量比', '1.34', colors.red],
]

const TICKS = `14:56 1643.42 929.0万
14:56 1643.38 400.0万
14:56 1643.50 682.0万
14:56 1643.36 469.0万
14:56 1643.38 326.0万
14:56 1643.48 449.0万
14:56 1643.56 1162万
14:56 1643.49 796.0万
14:56 1643.44 612.0万
14:56 1643.40 552.0万
14:56 1643.54 573.0万
14:56 1643.87 1471万
14:56 1643.74 607.0万
14:56 1643.68 511.0万
14:56 1643.70 78.00万
14:57 1643.77 803.0万
14:57 1643.72 326.0万
14:57 1643.64 734.0万
14:57 1643.61 74.00万
14:57 1643.61 177.0万
14:57 1643.61 11.00万
15:00 1643.64 7848万
15:00 1644.24 1.70亿
15:00 1644.71 3.46亿
15:00 1644.68 1359万
15:00 1644.85 1123万`
	.split('\n')
	.map(row => row.split(' '))

const Quotes = () => (
	<QuotePanel>
		<QuoteTitle>
			<b>880482</b>
			<span>房地产</span>
		</QuoteTitle>
		<QuoteGroup $height={98} $top={5}>
			{TURNOVER.map(([name, value]) => (
				<QuoteRow key={name} $color={colors.gold}>
					<dt>{name}</dt>
					<dd>{value}</dd>
				</QuoteRow>
			))}
		</QuoteGroup>
		<QuoteGroup $height={230} $top={5}>
			{INDEX_ROWS.map(([name, value, color]) => (
				<QuoteRow key={name} $color={color}>
					<dt>{name}</dt>
					<dd>{value}</dd>
				</QuoteRow>
			))}
		</QuoteGroup>
		<QuoteGroup $height={20} $top={2}>
			<QuoteRow $color={colors.gold}>
				<dt>板指类型</dt>
				<dd>行业 成份股</dd>
				<svg width="15" height="14" viewBox="0 0 15 14" fill="none" stroke="#777">
					<rect x="2.500" y="1" width="11" height="12" rx="1" strokeWidth="1.500" />
					<path d="M5 4h2M5 7h2M5 10h2M9 4h2M9 7h2M9 10h2" />
				</svg>
			</QuoteRow>
		</QuoteGroup>
		<Breadth>
			<span>涨家.涨停</span>
			<b>116/5</b>
			<span>跌家.跌停</span>
			<b>5/0</b>
		</Breadth>
		<QuoteGroup $height={42} $top={5}>
			<QuoteRow $color={colors.red}>
				<dt>净流入额</dt>
				<FlowBar $width={70} />
				<dd>31.94亿14%</dd>
			</QuoteRow>
			<QuoteRow $color={colors.red}>
				<dt>大宗流入</dt>
				<FlowBar $width={50} />
				<dd>23.21亿10%</dd>
			</QuoteRow>
		</QuoteGroup>
		<Ticks>
			<colgroup>
				<col width="92" />
				<col width="90" />
				<col />
			</colgroup>
			<tbody>
				{TICKS.map((row, n) => (
					<tr key={n}>
						{row.map((v, k) => (
							<td key={k}>{v}</td>
						))}
					</tr>
				))}
			</tbody>
		</Ticks>
		<QuoteTabs>
			{'笔价细势联值主筹'.split('').map((t, n) => (
				<QuoteTab key={t} $active={n === 0}>
					{t}
				</QuoteTab>
			))}
		</QuoteTabs>
	</QuotePanel>
)

/* ---------- side tools ---------- */

const SideBar = styled.nav`
	display: flex;
	flex-direction: column;
	align-items: center;
	width: 24px;
	background: #f0f0f0;
`

const SideButton = styled.button`
	display: flex;
	align-items: center;
	justify-content: center;
	width: 22px;
	height: 23px;
	color: #1a3c9c;
	font: ${p => (p.$bold ? 'bold 11px' : '12px')}/20px ${sans};
	${p =>
		p.$active &&
		css`
			border: 1px solid #fff;
			border-top-color: #888;
			border-left-color: #888;
			background: #fafafa;
		`}
`

const SideRule = styled.hr`
	width: 20px;
	height: 1px;
	margin: 3px 0;
	border: 0;
	background: #999;
`

const Boxed = ({ children, color = '#3b78d8' }) => (
	<svg width="16" height="16" viewBox="0 0 16 16" fill="none">
		<rect x="0.500" y="0.500" width="15" height="15" fill="#fff" stroke={color} strokeWidth="1.400" />
		{children}
	</svg>
)

const BoxText = ({ children }) => (
	<Boxed>
		<text x="8" y="12" textAnchor="middle" fill="#1a3c9c" fontFamily="Liberation Sans" fontSize="9">
			{children}
		</text>
	</Boxed>
)

const arrowPath = 'M1 8l6 -6v3.500h7v5h-7v3.500z'

const SIDE_ICONS = [
	['后退', <svg width="16" height="16"><path d={arrowPath} fill="#fff" stroke="#3b78d8" /></svg>],
	['上移', <svg width="16" height="16"><path d={arrowPath} transform="rotate(90 8 8)" fill="#fff" stroke="#3b78d8" /></svg>],
	['下移', <svg width="16" height="16"><path d={arrowPath} transform="rotate(-90 8 8)" fill="#fff" stroke="#3b78d8" /></svg>],
	['自选', <Boxed><path d="M2 3h5M2 6h5M2 9h4M2 12h4" stroke="#008000" /><path d="M9 3h5M9 6h5" stroke="#e00000" /><circle cx="10.500" cy="11" r="3" fill="#ddd" stroke="#666" /></Boxed>],
	['报价', <Boxed><path d="M2 4h3M2 6h3M2 8h3M2 10h3M2 12h3" stroke="#e00000" /><path d="M6.500 4h3M6.500 6h3M6.500 8h3M6.500 10h3M6.500 12h3" stroke="#008000" /><path d="M11 4h3M11 6h3M11 8h3M11 10h3M11 12h3" stroke="#0000e0" /></Boxed>],
	['分时', <Boxed><path d="M2 10l3 -2l2 1l3 -3l2 1l2 -2" stroke="#e00000" /></Boxed>],
	['K线', <Boxed><path d="M3.500 5v7M12.500 2v7" stroke="#e00000" /><path d="M8 4v9" stroke="#008000" /><path d="M2 7h3v3h-3zM11 4h3v3h-3z" fill="#e00000" /><path d="M6.500 6h3v5h-3z" fill="#008000" /></Boxed>],
	['多页', <svg width="16" height="16" fill="#fff" stroke="#3b78d8"><rect x="4.500" y="1.500" width="11" height="9" /><rect x="0.500" y="4.500" width="12" height="11" /><path d="M2 8h4M7 8h4M2 10.500h4M7 10.500h4M2 13h4M7 13h4" stroke="#666" /></svg>],
	['F10', <BoxText>F10</BoxText>],
	['结构', <Boxed><path d="M5 5v7h5M5 8h5" stroke="#3b78d8" /><path d="M3 2h4v3h-4zM9 6h4v3h-4zM9 11h4v3h-4z" fill="#ffd860" stroke="#c89000" /></Boxed>],
	['资讯', <Boxed color="#2090e0"><path d="M5 4h6v9h-6zM5 7h6M5 10h6M8 2v2" stroke="#ff6a20" strokeWidth="1.500" /></Boxed>],
	['F12', <BoxText>F12</BoxText>],
	['公式', <Boxed color="#007878"><text x="8" y="12" textAnchor="middle" fill="#1a3c9c" fontFamily="Liberation Serif" fontStyle="italic" fontSize="10">f(x)</text></Boxed>],
	['圆', <Boxed><circle cx="8" cy="8" r="3.500" stroke="#1a5cc0" /></Boxed>],
]

const SIDE_ICONS_2 = [
	['对比', <Boxed><path d="M2 6l2 -2l2 2l2 -2l2 2l2 -2l2 1" stroke="#e00000" /><path d="M2 8l2 -1l2 1l2 -1l2 1l2 -1l2 1" stroke="#0000e0" /><path d="M2 11l2 -1l2 1l2 -1l2 1l2 -1l2 1" stroke="#e00000" /><path d="M2 13.500l2 -1l2 1l2 -1l2 1l2 -1l2 1" stroke="#0000e0" /></Boxed>],
	['RSI', <span>RSI</span>],
	['S', <svg width="16" height="16"><path d="M4 4l4 -4l4 4z" fill="#d04040" /><text x="8" y="15" textAnchor="middle" fill="#c83030" fontFamily="Liberation Sans" fontWeight="bold" fontSize="14">S</text></svg>],
	['移动', <Move size={16} color="#0050c0" strokeWidth={2.5} />],
	['画线', <Pencil size={16} color="#a06020" fill="#f0b040" strokeWidth={1.5} />],
]

const SideTools = () => (
	<SideBar>
		{SIDE_ICONS.map(([name, icon]) => (
			<SideButton key={name} aria-label={name}>{icon}</SideButton>
		))}
		<SideRule />
		{SIDE_ICONS_2.map(([name, icon]) => (
			<SideButton key={name} aria-label={name} $bold>{icon}</SideButton>
		))}
		<SideRule />
		<SideButton aria-label="F5"><BoxText>F5</BoxText></SideButton>
		<SideButton aria-label="刷新">
			<Boxed><g transform="translate(3 3)"><RefreshCw size={10} color="#30a830" strokeWidth={4} /></g></Boxed>
		</SideButton>
		{'1 5 15 30 60 日 周 月 N 多 季 年'.split(' ').map(t => (
			<SideButton key={t} $active={t === '周'}>{t}</SideButton>
		))}
	</SideBar>
)

/* ---------- shortcuts and status ---------- */

const Shortcuts = styled.nav`
	display: flex;
	align-items: center;
	gap: 24px;
	height: 39px;
	padding: 0 18px 0 15px;
	border-top: 1px solid #eee;
	background: #c8c8c8;
`

const Shortcut = styled.button`
	display: flex;
	align-items: center;
	gap: 12px;
	color: #000;
	font: 15px/24px ${cjk};
`

const AddButton = styled.button`
	align-self: flex-end;
	width: 32px;
	height: 23px;
	margin-left: auto;
	border: 2px dotted #4a9ee0;
	border-bottom: 0;
	svg {
		margin: 4px auto 0;
	}
`

const Glyph = ({ children }) => (
	<svg width="28" height="30" viewBox="0 0 28 30" fill="none">
		{children}
	</svg>
)

const SHORTCUTS = [
	['买入', <Glyph><path d="M4 8h4v3l-4 7h5l2 4h6l2 -4h5l-4 -7v-3h4l4 9v11h-28v-11z" fill="#f55f4b" /><path d="M14 3v14M9 12l5 5l5 -5" stroke="#f55f4b" strokeWidth="2.500" /></Glyph>],
	['卖出', <Glyph><path d="M4 8h4v3l-4 7h5l2 4h6l2 -4h5l-4 -7v-3h4l4 9v11h-28v-11z" fill="#14a0e6" /><path d="M14 18v-14M9 8l5 -5l5 5" stroke="#14a0e6" strokeWidth="2.500" /></Glyph>],
	['撤单', <Glyph><path d="M0 3h6v-3h8v3h6v14h-7v9h-13z" fill="#ff9620" /><path d="M3 6h14M4 11h11M4 16h8" stroke="#c8c8c8" strokeWidth="2" /><circle cx="17" cy="23" r="6.500" fill="#ff9620" /><path d="M14 20l6 6m0 -6l-6 6" stroke="#c8c8c8" strokeWidth="2" /></Glyph>],
	['我的自选', <Glyph><path d="M13 1v15h15a14 14 0 1 1 -15 -15z" fill="#5fafef" /><path d="M17 2q10 2 10 11h-10z" stroke="#5fafef" strokeWidth="2" /></Glyph>],
	['沪深市场', <Glyph><path d="M0 24l7 -6l5 4l14 -12v19h-26z" fill="#f55f4b" /><path d="M1 18l6 -6l5 4l12 -13M18 3h6v6" stroke="#f55f4b" strokeWidth="2.500" /></Glyph>],
	['自选股资讯', <Glyph><path d="M3 2h13l7 7v16q0 3 -3 3h-14q-3 0 -3 -3z" fill="#14a0e6" /><path d="M15 2v8h8M7 14h12M7 20h12" stroke="#c8c8c8" strokeWidth="2" /></Glyph>],
	['新股日历', <Glyph><path d="M1 2h25v27h-25z" fill="#ff9620" /><path d="M1 7.500h25" stroke="#c8c8c8" strokeWidth="2" /><path d="M14 12.500h4v3h-4zM19 12.500h4v3h-4zM4 17.500h4v3h-4zM9 17.500h4v3h-4zM14 17.500h4v3h-4zM19 17.500h4v3h-4zM4 22.500h4v3h-4zM9 22.500h4v3h-4zM14 22.500h4v3h-4z" fill="#c8c8c8" /></Glyph>],
	['资管产品', <Glyph><path d="M1 9h25v18h-25z" fill="#ff9620" /><path d="M9 9v-5h9v5" stroke="#ff9620" strokeWidth="3" /><circle cx="13.500" cy="18" r="7" fill="#c8c8c8" /><path d="M17 15q-3 -3 -6 0q-1 3 3 3t3 4q-3 2 -6 0M14 12v12" stroke="#ff9620" strokeWidth="1.500" /></Glyph>],
	['融资融券', <Glyph><path d="M0 5h28v23h-28z" fill="#f55f4b" /><circle cx="14" cy="14" r="5.500" fill="#c8c8c8" /><path d="M11 11l3 3l3 -3M14 14v4M11 15h6" stroke="#f55f4b" /><path d="M0 23.500h28" stroke="#c8c8c8" strokeDasharray="2 2" /></Glyph>],
	['期权交易', <Glyph><path d="M5 5h22v16" stroke="#f55f4b" strokeWidth="2" /><path d="M0 8h25v18h-25z" fill="#f55f4b" /><circle cx="12" cy="17" r="7" fill="#c8c8c8" /><path d="M8 14h4M8 17h4M8 20h4M9 13v7M14 13h3v8M14 13v8M14 17h3" stroke="#f55f4b" /></Glyph>],
]

const StatusBar = styled.footer`
	display: flex;
	align-items: center;
	height: 27px;
	padding: 0 10px 0 5px;
	background: #e6e6e6;
	color: #000;
	font: 12px/18px ${sans};
	white-space: nowrap;
`

const StatusButton = styled.button`
	display: flex;
	align-items: center;
	gap: 5px;
	margin-right: 13px;
`

const Market = styled.div`
	display: grid;
	grid-template-columns: 28px 48px 42px 52px 50px;
	b {
		color: #f00000;
	}
	b:nth-of-type(2) {
		text-align: right;
	}
	b:nth-of-type(3) {
		padding-left: 8px;
	}
`

const Link = styled.span`
	display: flex;
	align-items: center;
	gap: 3px;
	margin-left: 6px;
	b {
		width: 16px;
		background: #1e8ce6;
		color: #fff;
		font-weight: normal;
		line-height: 18px;
		text-align: center;
	}
`

const StatusTools = styled.div`
	display: flex;
	gap: 8px;
	margin-left: auto;
	button {
		display: grid;
		place-items: center;
		width: 22px;
		height: 22px;
		background: #f0f0f0;
		color: #555;
	}
`

const MARKETS = [
	['上证', '3338.09', '67.65', '2.07%', '3370亿'],
	['深证', '13245.1', '229.90', '1.77%', '4987亿'],
	['中小', '8828.56', '147.12', '1.69%', '1591亿'],
	['沪深', '4737.09', '104.38', '2.25%', '2819亿'],
	['创业', '2596.08', '38.76', '1.52%', '2449亿'],
]

const Status = () => (
	<StatusBar>
		<StatusButton>
			<svg width="15" height="17"><rect width="15" height="17" rx="1" fill="#444" /><path d="M3 8.500h9" stroke="#fff" strokeWidth="2" /></svg>
			隐藏快捷
		</StatusButton>
		<StatusButton>
			<svg width="17" height="17"><path d="M0 1h14v10h-7l-3 3v-3h-4z" fill="#1e96e6" /><path d="M15 4h2v10h-2v3l-3 -3h-4v-1h7z" fill="#1e96e6" /><path d="M3 6h2M6 6h2M9 6h2" stroke="#fff" strokeWidth="2" /></svg>
			在线客服
		</StatusButton>
		<StatusButton>
			<svg width="15" height="17"><rect width="15" height="17" rx="1" fill="#1e96e6" /><path d="M4 10l6 -7l1.500 1.500l-6 6zM4 13.500h8" fill="#fff" stroke="#fff" /></svg>
			留言反馈
		</StatusButton>
		<svg width="23" height="15"><path d="M0 1.500h17M8 5.500h9M9 9.500h8M10 13.500h7" stroke="#1e96e6" strokeWidth="2" /><path d="M0 4l7 1l-2 2l3 4l-2 2l-3 -4l-2 2z" fill="#1e96e6" /></svg>
		{MARKETS.map(([name, index, change, percent, amount]) => (
			<Market key={name}>
				<span>{name}</span>
				<b>{index}</b>
				<b>{change}</b>
				<b>{percent}</b>
				<span>{amount}</span>
			</Market>
		))}
		<Link>
			<b>2</b>
			已连接
		</Link>
		<StatusTools>
			<button aria-label="声音"><Volume2 size={17} strokeWidth={1.5} /></button>
			<button aria-label="键盘"><Keyboard size={19} strokeWidth={1.5} /></button>
			<button aria-label="附件"><Paperclip size={17} strokeWidth={1.5} /></button>
			<button aria-label="卫星"><SatelliteDish size={17} strokeWidth={1.5} /></button>
			<button aria-label="提醒"><Bell size={17} strokeWidth={1.5} /></button>
		</StatusTools>
	</StatusBar>
)

/* ---------- desktop task bar ---------- */

const TaskBar = styled.footer`
	display: flex;
	height: 40px;
	background: linear-gradient(90deg, #24333c, #2b3636 18%, #25323c 60%, #26292b 78%, #1c2a33);
	color: #fff;
`

const TaskGroup = styled.div`
	display: flex;
	margin-right: 3px;
`

const Task = styled.button`
	display: grid;
	place-items: center;
	width: 49px;
	${p => p.$open && 'box-shadow: inset 0 -2px #76b9ed;'}
	${p => p.$active && 'background: #4f5c64;'}
`

const Tray = styled.div`
	display: flex;
	align-items: center;
	margin-left: auto;
	padding-right: 4px;
	border-right: 1px solid #66727a;
	margin-right: 3px;
	font: 16px/20px ${cjk};
`

const TraySlot = styled.button`
	display: grid;
	place-items: center;
	width: ${p => p.$width || 24}px;
	height: 40px;
`

const Clock = styled.time`
	width: 84px;
	font: 12px/19px ${cjk};
	text-align: center;
`

const ImeMark = styled.span`
	width: 16px;
	background: #fff;
	color: #000;
	font: 14px/18px ${cjk};
`

const NoteIcon = ({ color, round, count }) => (
	<svg width="30" height="28" viewBox="0 0 30 28">
		<path d="M4 3h16v15h-9l-4 4v-4h-3z" fill="#fff" />
		<path d="M7 7h10M7 10.500h10M7 14h7" stroke="#1c2a33" />
		<rect x="13" y="12" width="14" height="15" rx={round ? 7 : 0} fill={color} stroke={round ? '#aaa' : 'none'} />
		<text x="20" y="24" textAnchor="middle" fill="#fff" fontFamily="Liberation Sans" fontSize="11">{count}</text>
	</svg>
)

const petals = ['#ff4040', '#ff9a20', '#ffe030', '#50d050', '#30a0ff', '#b050e0']

const SYSTEM_TASKS = [
	['开始', <svg width="16" height="17" fill="#fff"><path d="M0 2.500l7 -1v6.500h-7zM8 1.300l8 -1.300v8h-8zM0 9h7v6.500l-7 -1zM8 9h8v8l-8 -1.300z" /></svg>],
	['任务视图', <svg width="18" height="16" fill="none" stroke="#fff" strokeWidth="1.300"><path d="M1 0v3h10v-3M1 5h10v7h-10zM1 16v-2h10v2M15 0v3M15 9v7" /><path d="M14 5h3v2h-3z" fill="#fff" /></svg>],
]

const TASKS = [
	['文件管理', <svg width="23" height="20"><path d="M0 1h9l2 3h11v15h-22z" fill="#f8c848" /><path d="M0 1h9l2 3h-11z" fill="#d89820" /><path d="M5 11h13v8h-4v-4h-5v4h-4z" fill="#38a0e8" /></svg>],
	['浏览器', <svg width="21" height="22"><path d="M0 9q2 -9 11 -9q9 1 9.500 9v4h-13q1 4 6 4q3 0 6 -1.500v4.500q-3 2 -7 2q-9 0 -10 -8q0 -4 5 -7q-4 0 -7.500 2zM8 9h7q-0.500 -4 -3.500 -4t-3.500 4z" fill="#0c80e0" fillRule="evenodd" /></svg>],
	['行情软件', <svg width="24" height="24"><rect width="24" height="24" rx="4" fill="#b80c18" /><circle cx="12" cy="12" r="9" fill="none" stroke="#ffd890" strokeWidth="1.500" /><path d="M6 16l3 -8l2 1l-1 7M10 15l3 -7l2 1l-1 7M14 15l3 -7q3 0 1 3l-2 5" fill="none" stroke="#ffd890" strokeWidth="1.800" /></svg>],
	['东北证券', <Swirl size={24} color="#1262ac" />],
	['视频', <svg width="24" height="24"><rect width="24" height="24" rx="4" fill="#ff7868" /><path d="M5 4l4 4h6l4 -4v15h-14z" fill="#fff" /><path d="M6 19l6 -9l6 9h-3l-3 -4l-3 4z" fill="#d02030" /></svg>],
	['牛', <svg width="24" height="24"><path d="M0 0q1 6 7 6h10q6 0 7 -6q1 9 -5 11l-2 8l-4 4h-2l-4 -4l-2 -8q-7 -2 -6 -11z" fill="#f00808" /><path d="M8 10l2 8h4l2 -8l-3 4h-2z" fill="#24333c" /></svg>],
	['彩色浏览器', <svg width="24" height="24">{petals.map((c, n) => <path key={c} transform={`rotate(${n * 60} 12 12)`} d="M12 12C8 8 8 2 12 0q7 0 10 6q-6 0 -10 6z" fill={c} />)}<circle cx="12" cy="12" r="3.500" fill="#fff" /></svg>, 'open'],
	['东北证券行情', <Swirl size={24} color="#1262ac" />, 'active'],
	['金币', <svg width="24" height="24"><circle cx="12" cy="12" r="11.500" fill="#a89848" /><circle cx="12" cy="12" r="9" fill="none" stroke="#706428" strokeDasharray="2 1" /><path d="M8 8q4 -5 8 0v4l-4 2l-4 -2zM7 16h10M9 19h6" stroke="#4c4418" fill="#80743c" /></svg>, 'open'],
]

const DesktopBar = () => (
	<TaskBar>
		{[SYSTEM_TASKS, TASKS].map((group, g) => (
			<TaskGroup key={g}>
				{group.map(([name, icon, state]) => (
					<Task key={name} aria-label={name} $open={!!state} $active={state === 'active'}>
						{icon}
					</Task>
				))}
			</TaskGroup>
		))}
		<Tray>
			<TraySlot aria-label="展开"><svg width="12" height="8" fill="none" stroke="#fff" strokeWidth="1.500"><path d="M1 7l5 -5l5 5" /></svg></TraySlot>
			<TraySlot aria-label="QQ">
				<svg width="16" height="18"><ellipse cx="8" cy="7" rx="5" ry="7" fill="#000" /><path d="M2 8l-2 6h16l-2 -6z" fill="#000" /><ellipse cx="8" cy="13" rx="4.500" ry="4" fill="#fff" /><path d="M3 9q5 2 10 0v2q-5 2 -10 0z" fill="#e02020" /><circle cx="6.500" cy="4.500" r="1.400" fill="#fff" /><circle cx="9.500" cy="4.500" r="1.400" fill="#fff" /><path d="M5 7h6l-3 2zM2 17h5M9 17h5" fill="#ffa020" stroke="#ffa020" /></svg>
			</TraySlot>
			<TraySlot aria-label="安全">
				<svg width="16" height="16"><circle cx="8" cy="8" r="8" fill="#ffd800" /><path d="M8 0a8 8 0 0 0 -8 8h8z" fill="#60c030" /><circle cx="8" cy="8" r="5" fill="#1c8020" /><path d="M8 5v6M5 8h6" stroke="#ffe800" strokeWidth="2" /></svg>
			</TraySlot>
			<TraySlot aria-label="音量"><Volume2 size={17} strokeWidth={1.3} /></TraySlot>
			<TraySlot>中</TraySlot>
			<TraySlot $width={36}><ImeMark>拼</ImeMark></TraySlot>
			<Clock>16:26<br />2020-09-19</Clock>
			<TraySlot $width={40} aria-label="便笺"><NoteIcon color="#e00808" count="2" /></TraySlot>
			<TraySlot $width={40} aria-label="通知"><NoteIcon color="#40484c" round count="1" /></TraySlot>
		</Tray>
	</TaskBar>
)

export default function App() {
	return (
		<Screen>
			<GlobalStyle />
			<TitleBar>
				<Brand href="#">
					<Swirl size={25} color="#fff" />
					<BrandName>
						东北证券
						<small>NORTHEAST SECURITIES</small>
					</BrandName>
				</Brand>
				<Menu>
					{'首页 服务 行情 资讯中心 交易 期权交易 期权行情'.split(' ').map(t => (
						<a key={t} href="#">{t}</a>
					))}
				</Menu>
				<WindowTools>
					<button aria-label="布局">
						<svg width="18" height="18" fill="none" stroke="#fff" strokeWidth="1.500"><rect x="1" y="1" width="16" height="16" rx="2" /><path d="M4 4h4v4h-4zM10 4h4v4h-4zM4 10h4v4h-4zM10 10h4v4h-4z" fill="#fff" stroke="none" /></svg>
					</button>
					<button aria-label="设置">
						<svg width="20" height="20" fill="none" stroke="#fff" strokeWidth="1.300"><path d="M7.500 1h5l1 3l3 -0.500l2.500 4l-2 2.500l2 2.500l-2.500 4l-3 -0.500l-1 3h-5l-1 -3l-3 0.500l-2.500 -4l2 -2.500l-2 -2.500l2.500 -4l3 0.500z" strokeLinejoin="round" /><circle cx="10" cy="10" r="3" /></svg>
					</button>
					<button aria-label="最小化"><svg width="13" height="16"><path d="M0 12.500h12" stroke="#fff" strokeWidth="3" /></svg></button>
					<button aria-label="还原"><svg width="16" height="16" fill="none" stroke="#fff" strokeWidth="1.600"><path d="M5 6v-4h10v7h-5M1 6h9v7h-9z" /></svg></button>
					<button aria-label="关闭"><X size={15} strokeWidth={4} /></button>
				</WindowTools>
			</TitleBar>
			<Body>
				<Main>
					<Workspace>
						<Left>
							<PricePane />
							<SarPane />
							<QdPane />
							<MqPane />
							<Timeline />
							<Strip>
								{INDICATORS.map(t => (
									<StripButton key={t} $color={t === '设置' && colors.cyan}>{t}</StripButton>
								))}
								<StripButton $first $width={37}>指标B</StripButton>
								<StripButton $width={36}>模 板</StripButton>
								<StripButton $width={25} aria-label="放大">+</StripButton>
								<StripButton $width={25} aria-label="缩小">-</StripButton>
							</Strip>
							<StockList />
							<Strip $last>
								<StripButton>扩展∨</StripButton>
								<StripButton $color={colors.cyan}>关联报价</StripButton>
								<StripButton $color={colors.gold}>市场资讯</StripButton>
								<StripButton $color={colors.gold}>板块资讯</StripButton>
							</Strip>
						</Left>
						<Quotes />
					</Workspace>
					<Shortcuts>
						{SHORTCUTS.map(([name, icon]) => (
							<Shortcut key={name}>
								{icon}
								{name}
							</Shortcut>
						))}
						<AddButton aria-label="添加"><Plus size={18} color="#3a9ae6" strokeWidth={3} /></AddButton>
					</Shortcuts>
					<Status />
				</Main>
				<SideTools />
			</Body>
			<DesktopBar />
		</Screen>
	)
}
